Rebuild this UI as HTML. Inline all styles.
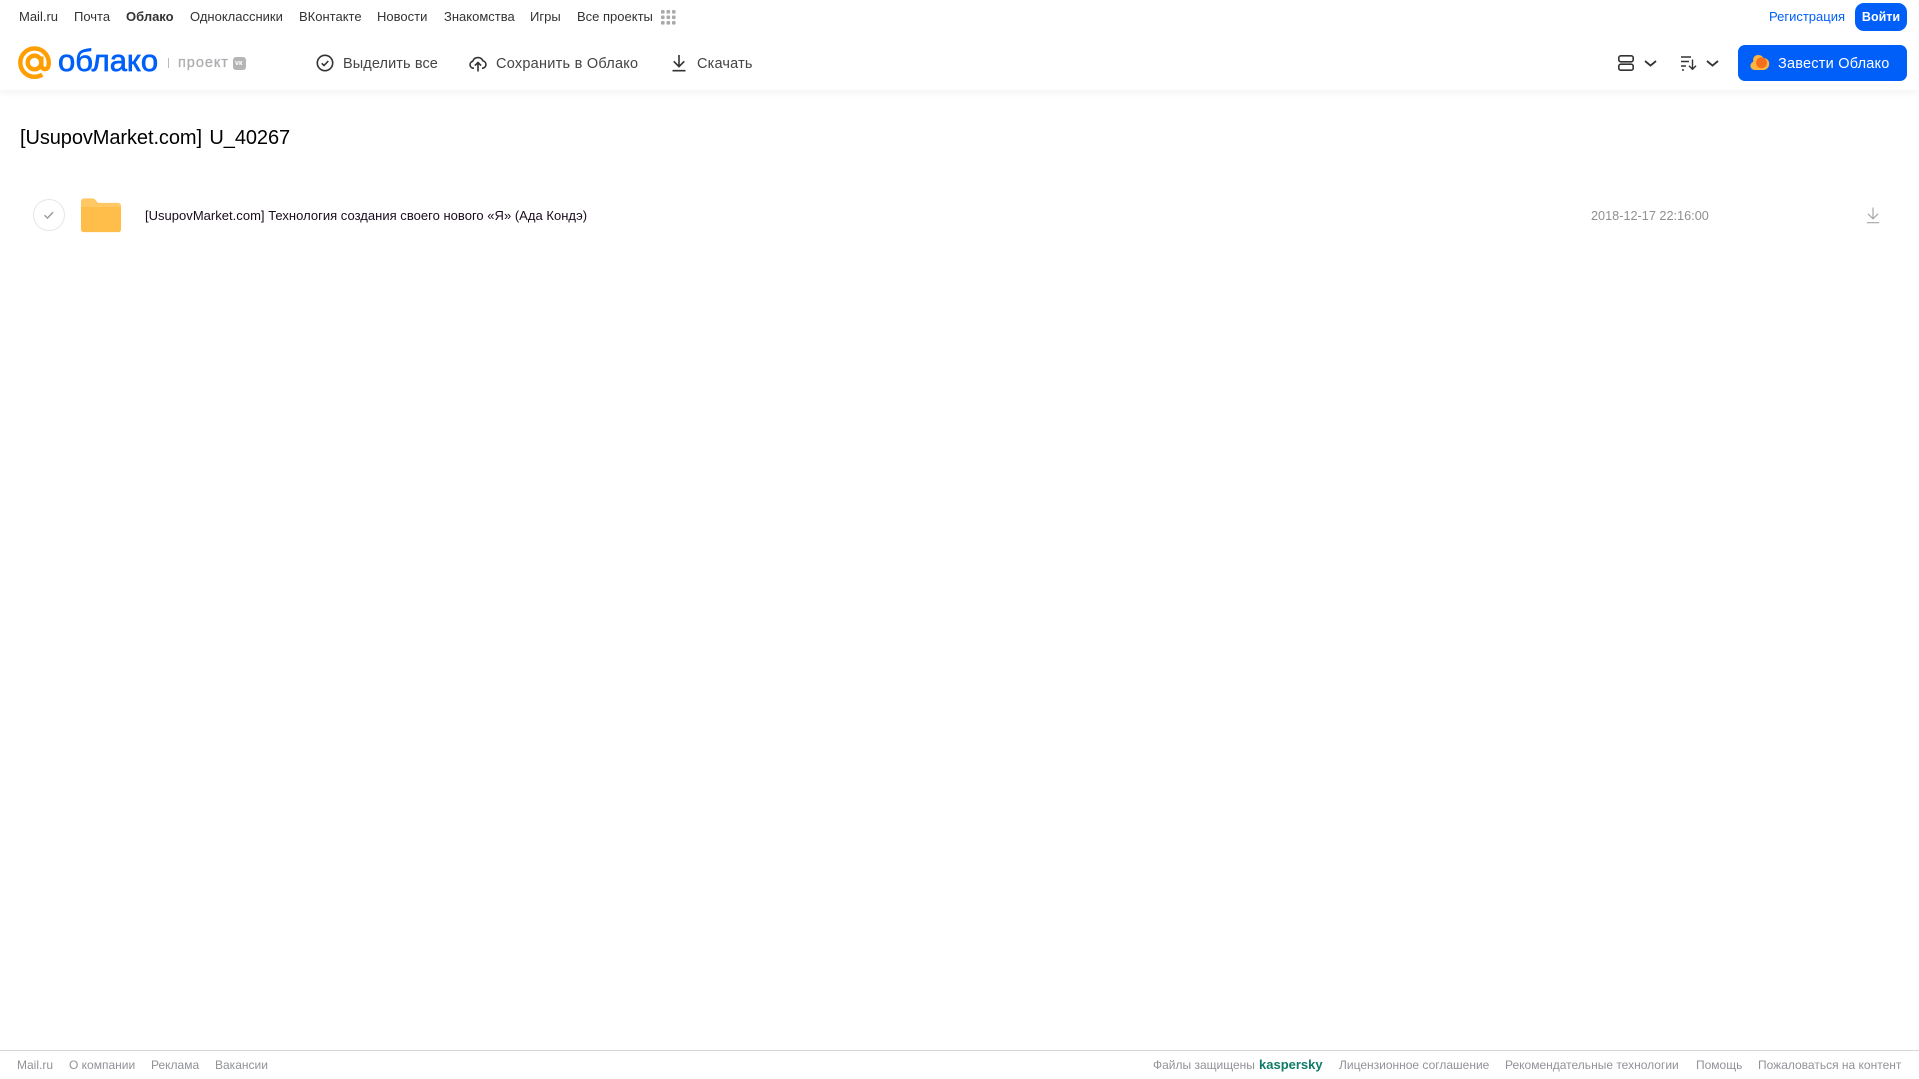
<!DOCTYPE html>
<html lang="ru"><head><meta charset="utf-8"><title>Облако</title>
<style>
html,body{margin:0;padding:0;width:1919px;height:1079px;overflow:hidden;background:#fff;font-family:"Liberation Sans","Noto Sans CJK SC",sans-serif}
.t{position:absolute;white-space:nowrap;line-height:16px}
.n{top:9px;font-size:13px;color:#333}
.b{top:56px;font-size:14.5px;color:#444;letter-spacing:.18px}
.f{top:1057px;font-size:12px;color:#919399}
svg{position:absolute;overflow:visible}
</style></head><body>
<div style="position:absolute;left:0;top:0;width:1919px;height:90px;background:#fff;box-shadow:0 2px 8px rgba(0,0,0,.06)"></div>

<span class="t n" style="left:19px">Mail.ru</span>
<span class="t n" style="left:74px">Почта</span>
<span class="t n" style="left:126px;font-weight:700">Облако</span>
<span class="t n" style="left:190px">Одноклассники</span>
<span class="t n" style="left:299px">ВКонтакте</span>
<span class="t n" style="left:377px">Новости</span>
<span class="t n" style="left:444px">Знакомства</span>
<span class="t n" style="left:530px">Игры</span>
<span class="t n" style="left:577px">Все проекты</span>
<svg style="left:661px;top:10px" width="15" height="15" fill="#aaa"><rect x="0" y="0" width="3.6" height="3.6" rx="1"/><rect x="5.5" y="0" width="3.6" height="3.6" rx="1"/><rect x="11" y="0" width="3.6" height="3.6" rx="1"/><rect x="0" y="5.5" width="3.6" height="3.6" rx="1"/><rect x="5.5" y="5.5" width="3.6" height="3.6" rx="1"/><rect x="11" y="5.5" width="3.6" height="3.6" rx="1"/><rect x="0" y="11" width="3.6" height="3.6" rx="1"/><rect x="5.5" y="11" width="3.6" height="3.6" rx="1"/><rect x="11" y="11" width="3.6" height="3.6" rx="1"/></svg>

<span class="t" style="left:1769px;top:9px;font-size:13px;color:#005ff9">Регистрация</span>
<div class="t" style="left:1855px;top:3px;width:52px;height:28px;line-height:29px;border-radius:9px;background:#005ff9;color:#fff;font-size:12.5px;font-weight:700;text-align:center">Войти</div>

<svg style="left:18px;top:46px" width="34" height="34" viewBox="0 0 34 34" fill="none" stroke="#ff9e00" stroke-width="4.4"><circle cx="16.5" cy="16.5" r="6.8"/><path d="M23.3 10.5v8.2c0 2.9 1.700 4.400 3.700 4.400 2.300 0 3.800-2 3.800-6.200C30.800 8.900 24.500 2.400 16.500 2.400 8.700 2.400 2.300 8.800 2.300 16.600 2.300 24.500 8.700 30.800 16.500 30.800c3 0 5.600-.8 7.800-2.300"/></svg>
<span class="t" style="left:58px;top:43px;line-height:36px;font-size:31px;color:#005ff9;-webkit-text-stroke:.7px #005ff9">облако</span>
<div style="position:absolute;left:168px;top:58px;width:1px;height:10px;background:#bbb"></div>
<span class="t" style="left:178px;top:55px;font-size:14.5px;color:#aeaeb2;letter-spacing:.95px;-webkit-text-stroke:.3px #aeaeb2">проект</span>
<div style="position:absolute;left:233px;top:57px;width:13px;height:13px;border-radius:3px;background:#b5b5b8"></div>
<span class="t" style="left:235px;top:59px;font-size:7px;line-height:9px;font-weight:700;color:#fff">vк</span>

<svg style="left:316px;top:54px" width="18" height="18" viewBox="0 0 18 18" fill="none" stroke="#333" stroke-width="1.6"><circle cx="9" cy="9" r="7.700"/><path d="M5.700 9.300l2.300 2.200 4.300-4.500"/></svg>
<span class="t b" style="left:343px;letter-spacing:.1px">Выделить все</span>

<svg style="left:469px;top:54px" width="18" height="18" viewBox="0 0 18 18" fill="none" stroke="#333" stroke-width="1.6"><path d="M5 14.200H4.500A3.500 3.500 0 0 1 3.700 7.300 5.500 5.500 0 0 1 14 6.900 3.700 3.700 0 0 1 13.600 14.200H13"/><path d="M9 17.500V8.800M5.900 11.600 9 8.500l3.100 3.100"/></svg>
<span class="t b" style="left:496px;letter-spacing:.25px">Сохранить в Облако</span>

<svg style="left:671px;top:54px" width="16" height="18" viewBox="0 0 16 18" fill="none" stroke="#333" stroke-width="1.6"><path d="M8 1v11.300M2.700 7.300 8 12.600l5.300-5.300M1.500 16.700h13"/></svg>
<span class="t b" style="left:697px">Скачать</span>

<svg style="left:1618px;top:55px" width="16" height="16" viewBox="0 0 16 16" fill="none" stroke="#333" stroke-width="1.600"><rect x=".8" y=".8" width="14.400" height="6" rx="2"/><rect x=".8" y="9.200" width="14.400" height="6" rx="2"/></svg>
<svg style="left:1644px;top:60px" width="13" height="7" fill="none" stroke="#333" stroke-width="1.800"><path d="M1 1l5.500 4.600L12 1"/></svg>
<svg style="left:1681px;top:56px" width="16" height="15" viewBox="0 0 16 15" fill="none" stroke="#333" stroke-width="1.400"><path d="M0 1h10M0 5.500h8M0 10h5M1 14h2"/><path d="M11.500 3.500V13M8 9.700l3.500 3.500L15 9.700"/></svg>
<svg style="left:1706px;top:60px" width="13" height="7" fill="none" stroke="#333" stroke-width="1.800"><path d="M1 1l5.500 4.600L12 1"/></svg>

<div style="position:absolute;left:1738px;top:45px;width:169px;height:36px;border-radius:7px;background:#005ff9"></div>
<svg style="left:1750px;top:54px" width="20" height="17" viewBox="0 0 20 17"><path d="M4.500 16A4.200 4.200 0 0 1 3.400 7.800 5 5 0 0 1 8.500 1a6 6 0 0 1 5 3 5.700 5.700 0 0 1 5.700 6 6 6 0 0 1-5.700 6z" fill="#ffb53c"/><circle cx="11.500" cy="8.800" r="5.400" fill="#f56d1f"/></svg>
<span class="t" style="left:1778px;top:56px;font-size:14.5px;color:#fff;letter-spacing:.22px">Завести Облако</span>

<span class="t" style="left:20px;top:125px;line-height:26px;font-size:20px;color:#000;word-spacing:2px;letter-spacing:-.08px">[UsupovMarket.com] U_40267</span>

<svg style="left:33px;top:199px" width="32" height="32" fill="#fff" stroke="#e6e6e6"><circle cx="16" cy="16" r="15.500"/><path d="M11.500 16.300l3 2.800 5.500-6" fill="none" stroke="#9a9a9a" stroke-width="1.400"/></svg>
<svg style="left:81px;top:198px" width="40" height="35" viewBox="0 0 41 35"><path d="M0 3a3 3 0 0 1 3-3h8.500c2 0 3 1 4.500 3 .9 1.200 1.500 1.500 3 1.500H38a3 3 0 0 1 3 3V8H0z" fill="#ffc863"/><path d="M0 8h41v24a2.500 2.500 0 0 1-2.500 2.500h-36A2.500 2.500 0 0 1 0 32z" fill="#ffbd4a"/></svg>
<span class="t" style="left:145px;top:208px;font-size:13px;color:#1a0a1e;letter-spacing:.02px">[UsupovMarket.com] Технология создания своего нового «Я» (Ада Кондэ)</span>
<span class="t" style="left:1591px;top:208px;font-size:12.7px;color:#8f8f8f">2018-12-17 22:16:00</span>
<svg style="left:1866px;top:207px" width="14" height="17" viewBox="0 0 14 17" fill="none" stroke="#a6a6a6" stroke-width="1.200"><path d="M7 .5v11M2 6.800l5 5 5-5M.8 15.700h12.400"/></svg>

<div style="position:absolute;left:0;top:1050px;width:1919px;height:1px;background:#d6d6d6"></div>
<span class="t f" style="left:17px">Mail.ru</span>
<span class="t f" style="left:69px">О компании</span>
<span class="t f" style="left:151px">Реклама</span>
<span class="t f" style="left:215px">Вакансии</span>
<span class="t f" style="left:1153px">Файлы защищены</span>
<span class="t" style="left:1259px;top:1057px;font-size:13px;font-weight:700;color:#0f7b66">kaspersky</span>
<span class="t f" style="left:1339px">Лицензионное соглашение</span>
<span class="t f" style="left:1505px">Рекомендательные технологии</span>
<span class="t f" style="left:1696px">Помощь</span>
<span class="t f" style="left:1758px">Пожаловаться на контент</span>
</body></html>
